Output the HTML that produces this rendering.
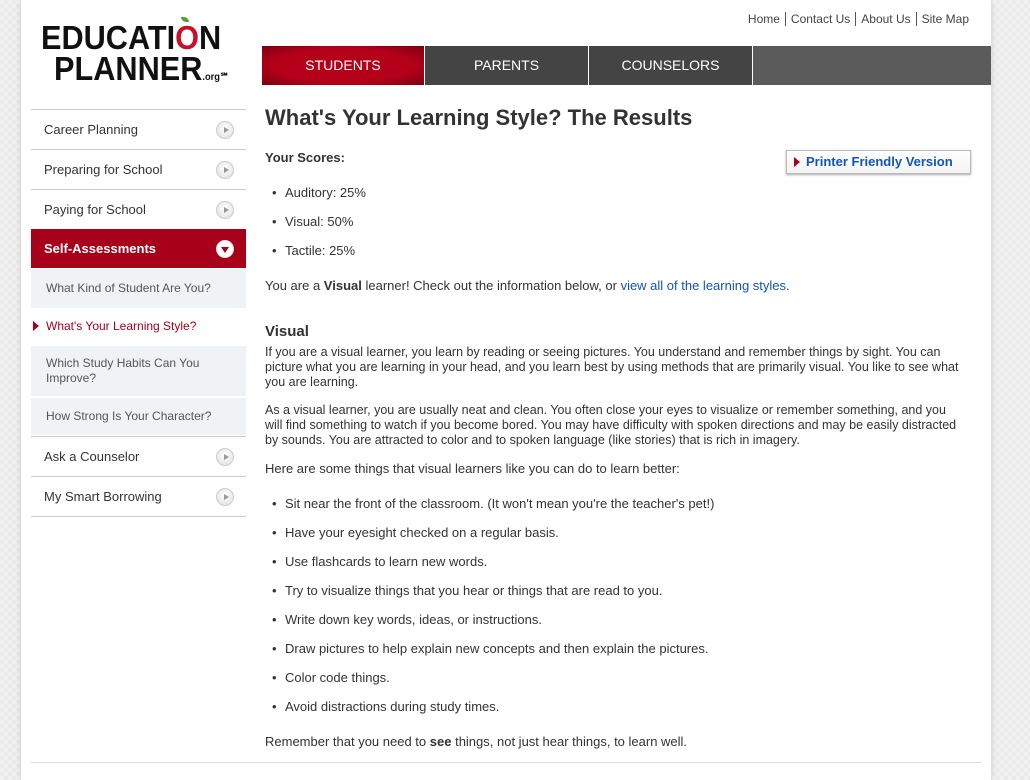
<!DOCTYPE html>
<html><head><style>
*{margin:0;padding:0;box-sizing:border-box}
body{width:1030px;height:780px;overflow:hidden;font-family:"Liberation Sans",Arial,sans-serif;background:#f1f1f1;background-image:linear-gradient(45deg,#eaeaea 25%,transparent 25%,transparent 75%,#eaeaea 75%),linear-gradient(45deg,#eaeaea 25%,transparent 25%,transparent 75%,#eaeaea 75%);background-size:8px 8px;background-position:0 0,4px 4px;position:relative;color:#333}
.page{position:absolute;left:21px;top:0;width:970px;height:780px;background:#fff;box-shadow:0 0 6px rgba(0,0,0,.15)}
.a{position:absolute}
.top{top:12px;right:17px;font-size:12px;color:#444}
.top span{padding:0 5px;border-left:1px solid #555}
.top span:first-child{border:none}
.tab{top:46px;height:39px;color:#fff;font-size:14px;text-align:center;line-height:39px}
.it{position:absolute;left:10px;width:215px;height:40px;border-top:1px solid #ccc;font-size:13px;line-height:39px;padding-left:13px;color:#333}
.ic{position:absolute;right:12px;top:11px;width:18px;height:18px;border-radius:50%;background:radial-gradient(circle at 50% 40%,#fff,#ddd);border:1px solid #ccc}
.ic:after{content:"";position:absolute;left:7px;top:5px;border-left:5px solid #999;border-top:3.5px solid transparent;border-bottom:3.5px solid transparent}
.icd:after{left:4px;top:6px;border-top:6px solid #a8001a;border-left:4px solid transparent;border-right:4px solid transparent;border-bottom:none}
.sub{position:absolute;left:10px;width:215px;background:#eff3f6;font-size:12px;color:#555;padding-left:15px}
.c{left:244px;font-size:13px;color:#333}
ul{list-style:none}
li{position:absolute;left:264px;font-size:13px}
li:before{content:"•";position:absolute;left:-13px}
a{color:#1155bb;text-decoration:none}
</style></head><body>
<div class="page">
<div class="a" style="left:20px;top:22px;font-size:33px;font-weight:bold;line-height:31px;color:#111;letter-spacing:0;transform:scaleX(0.93);transform-origin:0 0">EDUCATI<span style="color:#c8102e">O</span>N<br><span style="padding-left:14px">PLANNER</span><span style="font-size:10px;letter-spacing:0">.org℠</span></div>
<div class="a" style="left:160px;top:17px;width:8px;height:5px;background:#5a9e32;border-radius:0 6px 0 6px"></div>
<div class="a top"><span>Home</span><span>Contact Us</span><span>About Us</span><span>Site Map</span></div>
<div class="a tab" style="left:241px;width:162px;background:radial-gradient(ellipse at center,#b5001a 60%,#7a0010);">STUDENTS</div>
<div class="a tab" style="left:404px;width:163px;background:#444">PARENTS</div>
<div class="a tab" style="left:568px;width:163px;background:#444">COUNSELORS</div>
<div class="a tab" style="left:732px;width:238px;background:#5b5b5b"></div>

<div class="it" style="top:109px">Career Planning<i class="ic"></i></div>
<div class="it" style="top:149px">Preparing for School<i class="ic"></i></div>
<div class="it" style="top:189px">Paying for School<i class="ic"></i></div>
<div class="it" style="top:229px;background:#a8001a;color:#fff;font-weight:bold;border:none;height:39px">Self-Assessments<i class="ic icd" style="background:#fff;border-color:#ddd"></i></div>
<div class="sub" style="top:269px;height:39px;line-height:39px">What Kind of Student Are You?</div>
<div class="a" style="left:12px;top:321px;border-left:6px solid #a8001a;border-top:5px solid transparent;border-bottom:5px solid transparent"></div>
<div class="a" style="left:25px;top:319px;font-size:12px;color:#a8001a">What's Your Learning Style?</div>
<div class="sub" style="top:346px;height:50px;padding-top:10px;line-height:15px">Which Study Habits Can You<br>Improve?</div>
<div class="sub" style="top:398px;height:37px;line-height:37px">How Strong Is Your Character?</div>
<div class="it" style="top:436px">Ask a Counselor<i class="ic"></i></div>
<div class="it" style="top:476px">My Smart Borrowing<i class="ic"></i></div>
<div class="a" style="left:10px;top:516px;width:215px;border-top:1px solid #ccc"></div>

<div class="a c" style="top:105px;font-size:22px;font-weight:bold;color:#333">What's Your Learning Style? The Results</div>
<div class="a c" style="top:150px;font-weight:bold">Your Scores:</div>
<div class="a" style="left:765px;top:150px;width:185px;height:24px;border:1px solid #bbb;box-shadow:0 1px 2px #aaa;background:linear-gradient(#fff,#f3f3f3);font-size:13px;font-weight:bold;color:#1155bb;line-height:22px;padding-left:19px">Printer Friendly Version<span style="position:absolute;left:7px;top:6px;border-left:6px solid #a8001a;border-top:5px solid transparent;border-bottom:5px solid transparent"></span></div>
<ul>
<li style="top:185px">Auditory: 25%</li>
<li style="top:214px">Visual: 50%</li>
<li style="top:243px">Tactile: 25%</li>
</ul>
<div class="a c" style="top:278px">You are a <b>Visual</b> learner! Check out the information below, or <a>view all of the learning styles</a>.</div>
<div class="a c" style="top:323px;font-size:15px;font-weight:bold">Visual</div>
<div class="a c" style="top:345px;width:700px;line-height:15px;font-size:12.5px">If you are a visual learner, you learn by reading or seeing pictures. You understand and remember things by sight. You can picture what you are learning in your head, and you learn best by using methods that are primarily visual. You like to see what you are learning.</div>
<div class="a c" style="top:403px;width:695px;line-height:15px;font-size:12.5px">As a visual learner, you are usually neat and clean. You often close your eyes to visualize or remember something, and you will find something to watch if you become bored. You may have difficulty with spoken directions and may be easily distracted by sounds. You are attracted to color and to spoken language (like stories) that is rich in imagery.</div>
<div class="a c" style="top:461px">Here are some things that visual learners like you can do to learn better:</div>
<ul>
<li style="top:496px">Sit near the front of the classroom. (It won't mean you're the teacher's pet!)</li>
<li style="top:525px">Have your eyesight checked on a regular basis.</li>
<li style="top:554px">Use flashcards to learn new words.</li>
<li style="top:583px">Try to visualize things that you hear or things that are read to you.</li>
<li style="top:612px">Write down key words, ideas, or instructions.</li>
<li style="top:641px">Draw pictures to help explain new concepts and then explain the pictures.</li>
<li style="top:670px">Color code things.</li>
<li style="top:699px">Avoid distractions during study times.</li>
</ul>
<div class="a c" style="top:734px">Remember that you need to <b>see</b> things, not just hear things, to learn well.</div>
<div class="a" style="left:10px;top:762px;width:950px;border-top:1px solid #ddd"></div>
</div>
</body></html>
